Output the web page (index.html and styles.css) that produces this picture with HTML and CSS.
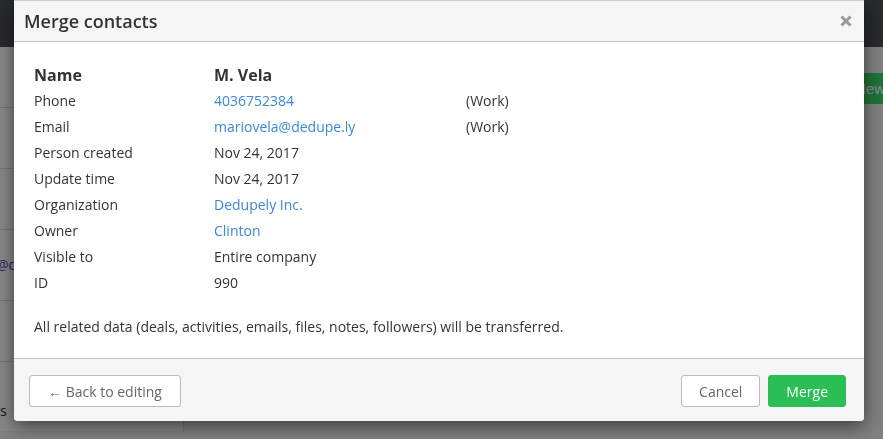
FILE: index.html
```html
<!DOCTYPE html>
<html lang="en">
<head>
    <meta charset="UTF-8">
    <title>Merge contacts</title>
    <link rel="stylesheet" href="styles.css">
</head>
<body>
    <!-- page behind the dialog -->
    <div class="page">
        <div class="topbar"></div>
        <div class="page-content">
            <div class="side">
                <div class="side-row"></div>
                <div class="side-row"></div>
                <div class="side-row"></div>
                <div class="side-row link">@d</div>
                <div class="side-row"></div>
                <div class="side-row text">nis</div>
            </div>
            <div class="main">
                <div class="main-top">
                    <span class="new-btn">New</span>
                </div>
            </div>
        </div>
    </div>
    <div class="overlay"></div>

    <div class="modal">
        <div class="modal-header">
            <h2>Merge contacts</h2>
            <svg class="close" width="12" height="12" viewBox="0 0 12 12">
                <path d="M1.5 1.5 L10.5 10.5 M10.5 1.5 L1.5 10.5" stroke="#999" stroke-width="3" fill="none"/>
            </svg>
        </div>
        <div class="modal-body">
            <table class="details">
                <tr class="head">
                    <td class="label">Name</td>
                    <td class="value">M. Vela</td>
                    <td></td>
                </tr>
                <tr>
                    <td class="label">Phone</td>
                    <td class="value"><a href="#">4036752384</a></td>
                    <td>(Work)</td>
                </tr>
                <tr>
                    <td class="label">Email</td>
                    <td class="value"><a href="#">mariovela@dedupe.ly</a></td>
                    <td>(Work)</td>
                </tr>
                <tr>
                    <td class="label">Person created</td>
                    <td class="value">Nov 24, 2017</td>
                    <td></td>
                </tr>
                <tr>
                    <td class="label">Update time</td>
                    <td class="value">Nov 24, 2017</td>
                    <td></td>
                </tr>
                <tr>
                    <td class="label">Organization</td>
                    <td class="value"><a href="#">Dedupely Inc.</a></td>
                    <td></td>
                </tr>
                <tr>
                    <td class="label">Owner</td>
                    <td class="value"><a href="#">Clinton</a></td>
                    <td></td>
                </tr>
                <tr>
                    <td class="label">Visible to</td>
                    <td class="value">Entire company</td>
                    <td></td>
                </tr>
                <tr>
                    <td class="label">ID</td>
                    <td class="value">990</td>
                    <td></td>
                </tr>
            </table>
            <p class="note">All related data (deals, activities, emails, files, notes, followers) will be transferred.</p>
        </div>
        <div class="modal-footer">
            <button type="button" class="btn">&larr; Back to editing</button>
            <div class="actions">
                <button type="button" class="btn btn-cancel">Cancel</button>
                <button type="button" class="btn btn-green">Merge</button>
            </div>
        </div>
    </div>
</body>
</html>
```

FILE: styles.css
```css
body {
    margin: 0;
    font-family: "Open Sans", "Noto Sans", sans-serif;
    font-size: 14px;
    color: #333;
    overflow: hidden;
}
.page {
    height: 439px;
    overflow: hidden;
    background-color: #e9e9e9;
}
.topbar {
    height: 47px;
    background-color: #4c4e55;
}
.page-content {
    display: flex;
}
.side {
    width: 183px;
    border-right: 1px solid #d0d0d0;
    background-color: #f7f7f7;
}
.side-row {
    height: 60px;
    border-bottom: 1px solid #d5d5d5;
}
.side-row.link {
    height: 70px;
    line-height: 70px;
    color: #4a4ab0;
    margin-left: -4px;
}
.side-row.text {
    height: 40px;
    line-height: 40px;
    margin-left: -12px;
    margin-top: 29px;
    border-bottom: none;
}
.main {
    flex: 1;
}
.main-top {
    display: flex;
    justify-content: flex-end;
    padding-top: 26px;
}
.new-btn {
    background-color: #3ad166;
    color: white;
    padding: 6px 12px 6px 8px;
    line-height: 19px;
    margin-right: -14px;
    font-family: "Liberation Sans", sans-serif;
    font-size: 15px;
}
.overlay {
    position: fixed;
    top: 0;
    left: 0;
    right: 0;
    bottom: 0;
    background-color: rgba(0, 0, 0, 0.45);
}
.modal {
    position: absolute;
    top: 0;
    left: 14px;
    width: 850px;
    background-color: #fff;
    border-radius: 0 0 4px 4px;
    box-shadow: 0 5px 18px rgba(0, 0, 0, 0.55);
    border-top: 1px solid #ccc;
}
.modal-header {
    display: flex;
    justify-content: space-between;
    align-items: center;
    height: 40px;
    padding: 0 12px 0 10px;
    background-color: #f5f5f5;
    border-bottom: 1px solid #c3c3c3;
}
.modal-header h2 {
    margin: 0;
    font-size: 18px;
    font-weight: 600;
    color: #333;
}
.close {
    display: block;
}
.modal-body {
    padding: 20px 20px 21px 20px;
}
.details {
    border-collapse: collapse;
}
.details td {
    padding: 0;
    height: 26px;
    line-height: 20px;
    vertical-align: middle;
}
.details .label {
    width: 180px;
}
.details .value {
    width: 252px;
}
.details .head td {
    font-size: 16px;
    font-weight: bold;
}
.details a {
    color: #3a88e0;
    text-decoration: none;
}
.note {
    margin: 21px 0 0 0;
    line-height: 20px;
}
.modal-footer {
    display: flex;
    justify-content: space-between;
    align-items: center;
    padding: 16px 18px 14px 15px;
    background-color: #f5f5f5;
    border-top: 1px solid #c3c3c3;
    border-radius: 0 0 4px 4px;
}
.actions {
    display: flex;
    gap: 8px;
}
.btn {
    height: 32px;
    padding: 0 18px;
    font-family: "Open Sans", "Noto Sans", sans-serif;
    font-size: 14px;
    color: #666;
    background-color: #fff;
    border: 1px solid #bbb;
    border-radius: 3px;
}
.btn-cancel {
    padding: 0 17px;
}
.btn-green {
    background-color: #2bbe55;
    border-color: #2bbe55;
    color: #fff;
    padding: 0 17px;
}
```
